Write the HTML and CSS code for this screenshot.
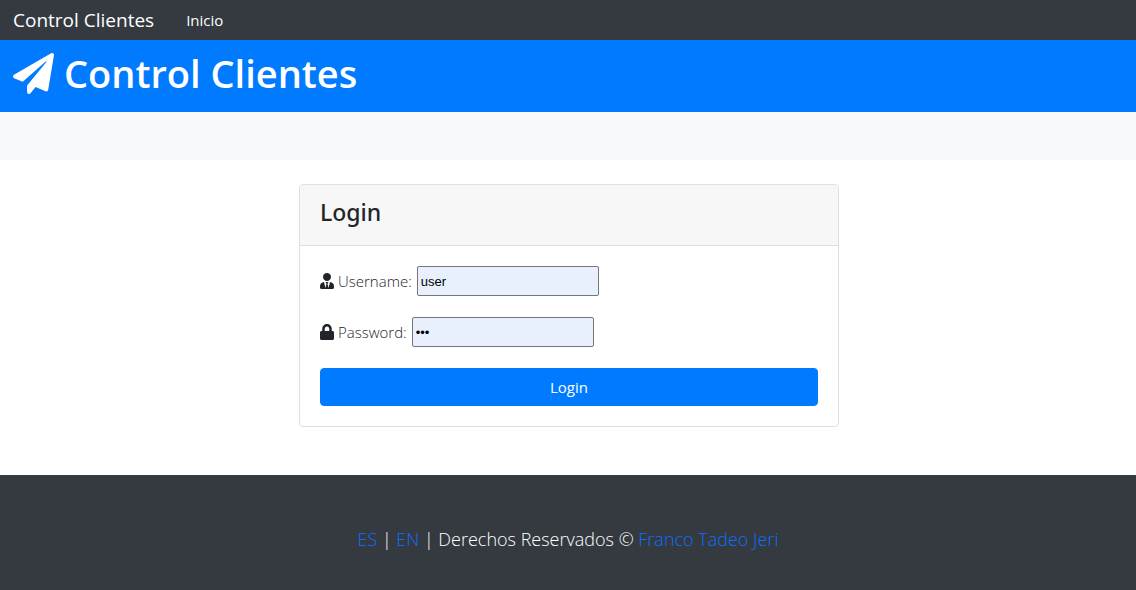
FILE: index.html
```html
<!DOCTYPE html>
<html lang="es">
<head>
<meta charset="utf-8">
<meta name="viewport" content="width=device-width, initial-scale=1">
<title>Control Clientes</title>
<link rel="stylesheet" href="styles.css">
</head>
<body>
<nav class="navbar">
  <a class="navbar-brand" href="#">Control Clientes</a>
  <a class="nav-link" href="#">Inicio</a>
</nav>
<header class="main-header">
  <h1 class="main-title">
    <svg class="title-icon" viewBox="0 0 512 512" aria-hidden="true"><path d="M476 3.2L12.5 270.6c-18.1 10.4-15.8 35.6 2.2 43.2L121 358.4l287.3-253.2c5.5-4.9 13.3 2.6 8.6 8.3L176 407v80.5c0 23.6 28.5 32.9 42.5 15.8L282 426l124.6 52.2c14.2 6 30.4-2.9 33-18.2l72-432C515 7.8 493.3-6.8 476 3.2z"/></svg>
    <span>Control Clientes</span>
  </h1>
</header>
<div class="actions"></div>
<main class="content">
  <section class="card">
    <div class="card-header"><h2 class="card-title">Login</h2></div>
    <form class="card-body">
      <div class="field">
        <label class="field-label" for="username"><svg class="field-icon" viewBox="0 0 448 512" aria-hidden="true"><path d="M224 256c70.7 0 128-57.3 128-128S294.7 0 224 0 96 57.3 96 128s57.3 128 128 128zm95.8 32.6L272 480l-32-136 32-56h-96l32 56-32 136-47.8-191.4C56.9 292 0 350.3 0 422.4V464c0 26.5 21.5 48 48 48h352c26.5 0 48-21.5 48-48v-41.6c0-72.1-56.9-130.4-128.2-133.8z"/></svg>Username:</label>
        <input class="field-input" id="username" type="text" value="user">
      </div>
      <div class="field">
        <label class="field-label" for="password"><svg class="field-icon" viewBox="0 0 448 512" aria-hidden="true"><path d="M400 224h-24v-72C376 68.2 307.8 0 224 0S72 68.2 72 152v72H48c-26.5 0-48 21.5-48 48v192c0 26.5 21.5 48 48 48h352c26.5 0 48-21.5 48-48V272c0-26.5-21.5-48-48-48zm-104 0H152v-72c0-39.7 32.3-72 72-72s72 32.3 72 72v72z"/></svg>Password:</label>
        <input class="field-input" id="password" type="password" value="123">
      </div>
      <button class="submit" type="submit">Login</button>
    </form>
  </section>
</main>
<footer class="footer">
  <p class="footer-text"><a class="footer-link" href="#">ES</a> | <a class="footer-link" href="#">EN</a> | Derechos Reservados © <a class="footer-link" href="#">Franco Tadeo Jeri</a></p>
</footer>
</body>
</html>
```
FILE: styles.css
```css
*, *::before, *::after { box-sizing: border-box; }
body {
  display: flex;
  flex-direction: column;
  min-height: 100vh;
  margin: 0;
  background: #fff;
  color: #212529;
  font-family: "Segoe UI", "Open Sans", "Noto Sans", sans-serif;
  font-size: 15px;
  line-height: 24px;
}
.navbar {
  display: flex;
  align-items: center;
  gap: 32px;
  height: 40px;
  padding: 0 13px;
  background: #343a40;
}
.navbar-brand { color: #fff; font-size: 19px; text-decoration: none; }
.nav-link { color: #fff; font-size: 15px; text-decoration: none; }
.main-header {
  padding: 9px 13px 15px;
  background: #007bff;
  color: #fff;
}
.main-title {
  display: flex;
  align-items: center;
  gap: 10px;
  margin: 0;
  font-size: 38px;
  font-weight: 600;
  line-height: 48px;
}
.title-icon { width: 41px; height: 41px; fill: currentColor; }
.actions { height: 48px; background: #f8f9fa; }
.content { padding: 24px 15px 48px 17px; }
.card {
  max-width: 540px;
  margin: 0 auto;
  border: 1px solid #dfdfdf;
  border-radius: 4px;
}
.card-header {
  padding: 13px 20px 19px;
  background: #f7f7f7;
  border-bottom: 1px solid #dfdfdf;
  border-radius: 3px 3px 0 0;
}
.card-title {
  margin: 0;
  font-family: "Segoe UI", "Noto Sans", sans-serif;
  font-size: 23px;
  font-weight: 500;
  line-height: 28px;
}
.card-body { padding: 20px; }
.field {
  display: flex;
  align-items: center;
  gap: 5px;
  margin-bottom: 21px;
}
.field-label {
  display: flex;
  align-items: center;
  gap: 4px;
  font-weight: 300;
}
.field-icon { width: 14px; height: 16px; fill: currentColor; }
.field-input {
  width: 182px;
  height: 30px;
  padding: 1px 3px;
  background: #e8f0fe;
  border: 1px solid #767676;
  border-radius: 2px;
  color: #000;
  font: 13px "Liberation Sans", Arial, sans-serif;
}
.submit {
  display: block;
  width: 100%;
  padding: 6px 12px;
  background: #007bff;
  border: 1px solid #007bff;
  border-radius: 4px;
  color: #fff;
  font: inherit;
}
.footer {
  flex-grow: 1;
  padding: 48px 16px 35px;
  background: #343a40;
  color: #fff;
  text-align: center;
}
.footer-text {
  margin: 0;
  font-size: 18px;
  font-weight: 300;
  line-height: 32px;
}
.footer-link { color: #0d6efd; text-decoration: none; }
```
